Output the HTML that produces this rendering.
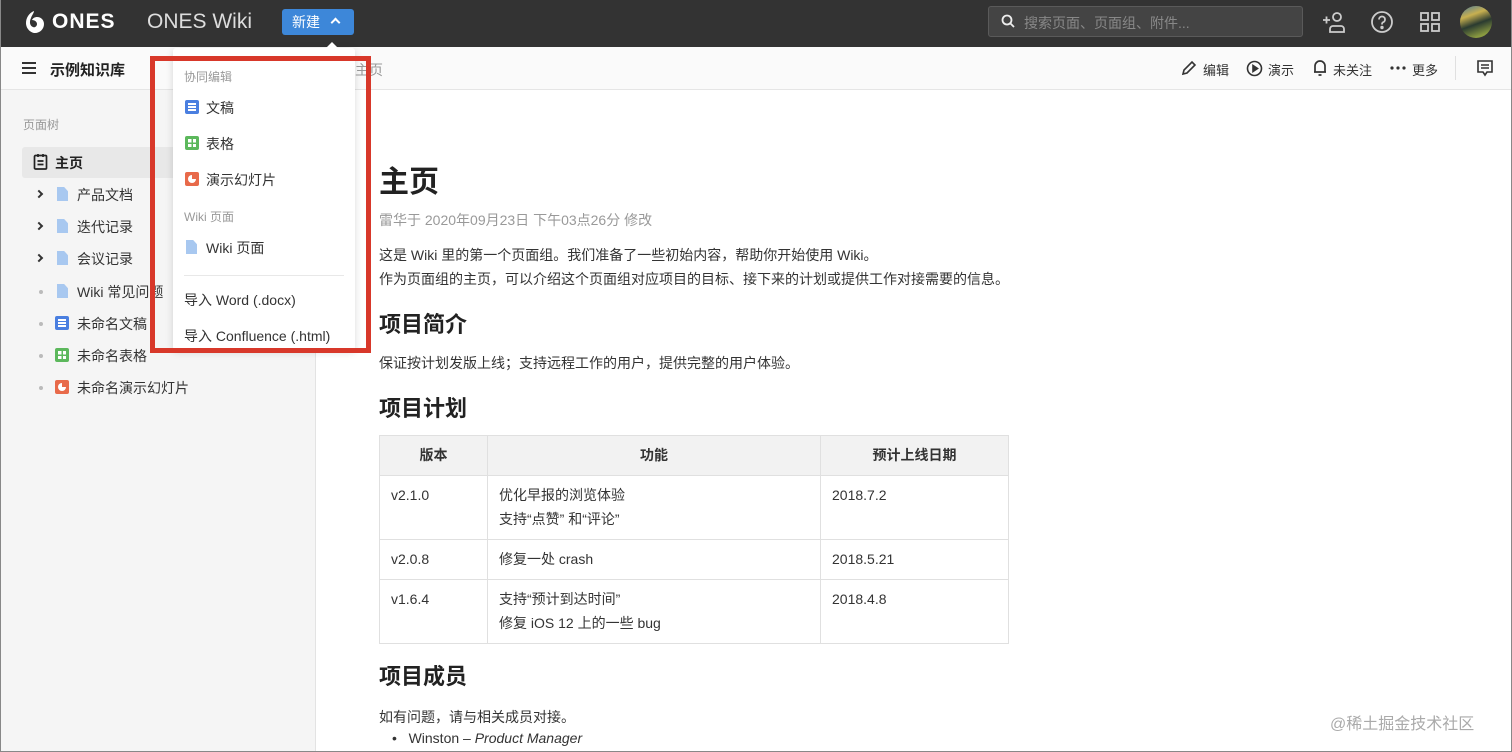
<!DOCTYPE html>
<html><head><meta charset="utf-8"><style>
*{margin:0;padding:0;box-sizing:border-box}
body{width:1512px;height:752px;overflow:hidden;position:relative;background:#fff;font-family:"Liberation Sans","Noto Sans CJK SC",sans-serif;color:#303030}
.a{position:absolute;white-space:nowrap}
#top{position:absolute;left:0;top:0;width:1512px;height:47px;background:#333}
#bar2{position:absolute;left:0;top:47px;width:1512px;height:43px;background:#fafafa;border-bottom:1px solid #e5e5e5}
#side{position:absolute;left:0;top:90px;width:316px;height:662px;background:#f5f5f5;border-right:1px solid #e3e3e3}
.ti{font-size:14px;color:#333}
.dot{position:absolute;width:4px;height:4px;border-radius:2px;background:#bbb}
.doc{position:absolute;width:11px;height:14px;background:#a8c8f0;clip-path:polygon(0 0,65% 0,100% 30%,100% 100%,0 100%)}
.ico{position:absolute;width:14px;height:14px;border-radius:2px}
.ico.d::after{content:"";position:absolute;left:3px;top:3px;width:8px;height:2px;background:#fff;box-shadow:0 3px 0 #fff,0 6px 0 #fff}
.ico.s::after{content:"";position:absolute;left:3px;top:3px;width:8px;height:8px;background:linear-gradient(90deg,transparent 45%,#5cb85c 45%,#5cb85c 60%,transparent 60%),linear-gradient(transparent 45%,#5cb85c 45%,#5cb85c 60%,transparent 60%),#fff}
.ico.p::after{content:"";position:absolute;left:3px;top:3px;width:8px;height:8px;border-radius:50%;background:conic-gradient(#e86a4a 0 25%,#fff 25%)}
.chev{position:absolute;width:6px;height:6px;border-right:2px solid #333;border-top:2px solid #333;transform:rotate(45deg)}
table{position:absolute;left:379px;top:435px;border-collapse:collapse;font-size:14px;color:#333}
td,th{border:1px solid #e0e0e0;vertical-align:top;text-align:left;padding:7px 11px 8px;line-height:24px}
th{background:#f2f2f2;text-align:center;height:40px;padding:7px 11px}
h2{position:absolute;font-size:22px;font-weight:bold;color:#222;white-space:nowrap}
.frame{position:absolute;left:0;top:0;width:1512px;height:752px;border:1px solid #888;border-top:none;pointer-events:none}
</style></head><body>
<div id="top"></div>
<svg class="a" style="left:24px;top:10px" width="22" height="24" viewBox="0 0 22 24"><path d="M10 1C5 3 2 8 2 13c0 6 5 10 9 10 5 0 9-4 9-9 0-4-3-7-7-7-2 0-4 1-5 3 3 0 5 2 5 4s-2 4-4 3c-3-1-4-5-2-9 1-3 3-5 3-7z" fill="#fff"/></svg>
<div class="a" style="left:52px;top:10px;font-size:21px;font-weight:bold;color:#fff;letter-spacing:1px">ONES</div>
<div class="a" style="left:147px;top:10px;font-size:21px;color:#ddd">ONES Wiki</div>
<div class="a" style="left:282px;top:9px;width:72px;height:26px;background:#3d87d9;border-radius:3px;color:#fff;font-size:14px;line-height:26px;padding-left:10px">新建</div>
<div class="a" style="left:332px;top:19px;width:7px;height:7px;border-left:2px solid #fff;border-top:2px solid #fff;transform:rotate(45deg)"></div>
<div class="a" style="left:988px;top:6px;width:315px;height:31px;background:#444;border:1px solid #5a5a5a;border-radius:3px"></div>
<svg class="a" style="left:1001px;top:14px" width="14" height="14"><circle cx="6" cy="6" r="4.5" stroke="#eee" stroke-width="1.8" fill="none"/><path d="M9.5 9.5L13 13" stroke="#eee" stroke-width="1.8"/></svg>
<div class="a" style="left:1024px;top:13px;font-size:14px;color:#888">搜索页面、页面组、附件...</div>
<svg class="a" style="left:1322px;top:10px" width="24" height="24" fill="none" stroke="#ccc" stroke-width="1.8"><path d="M1 10h7M4.5 6.5v7"/><circle cx="15" cy="7" r="4"/><path d="M8 22v-3a3 3 0 0 1 3-3h8a3 3 0 0 1 3 3v3z"/></svg>
<svg class="a" style="left:1370px;top:10px" width="24" height="24" fill="none" stroke="#ccc" stroke-width="1.8"><circle cx="12" cy="12" r="10"/><path d="M9 9.5a3 3 0 1 1 4 2.8c-1 .4-1 1-1 2.2"/><circle cx="12" cy="17.5" r=".8" fill="#ccc"/></svg>
<svg class="a" style="left:1419px;top:11px" width="22" height="22" fill="none" stroke="#ccc" stroke-width="1.8"><rect x="2" y="2" width="7" height="7"/><rect x="13" y="2" width="7" height="7"/><rect x="2" y="13" width="7" height="7"/><rect x="13" y="13" width="7" height="7"/></svg>
<div class="a" style="left:1460px;top:6px;width:32px;height:32px;border-radius:16px;background:linear-gradient(160deg,#4a7a9a 0%,#c8b050 30%,#2a3a30 55%,#8a9a40 85%)"></div>

<div id="bar2"></div>
<div class="a" style="left:22px;top:62px;width:14px;height:2px;background:#333;box-shadow:0 5px 0 #333,0 10px 0 #333"></div>
<div class="a" style="left:50px;top:59px;font-size:15px;font-weight:bold;color:#222">示例知识库</div>
<div class="a" style="left:355px;top:60px;font-size:14px;color:#999">主页</div>
<svg class="a" style="left:1181px;top:60px" width="16" height="16" fill="none" stroke="#333" stroke-width="1.6"><path d="M2 14l1-4 8-8 3 3-8 8z"/></svg>
<div class="a" style="left:1203px;top:60px;font-size:13px;color:#333">编辑</div>
<svg class="a" style="left:1246px;top:60px" width="17" height="17" fill="none" stroke="#333" stroke-width="1.6"><circle cx="8.5" cy="8.5" r="7"/><path d="M7 5.5v6l4.5-3z" fill="#333"/></svg>
<div class="a" style="left:1268px;top:60px;font-size:13px;color:#333">演示</div>
<svg class="a" style="left:1313px;top:59px" width="14" height="18" fill="none" stroke="#333" stroke-width="1.7"><path d="M2 13V7a5 5 0 0 1 10 0v6zM1 13h12M5.5 16h3"/></svg>
<div class="a" style="left:1333px;top:60px;font-size:13px;color:#333">未关注</div>
<svg class="a" style="left:1390px;top:66px" width="16" height="4"><circle cx="2" cy="2" r="1.6" fill="#333"/><circle cx="8" cy="2" r="1.6" fill="#333"/><circle cx="14" cy="2" r="1.6" fill="#333"/></svg>
<div class="a" style="left:1412px;top:60px;font-size:13px;color:#333">更多</div>
<div class="a" style="left:1455px;top:56px;width:1px;height:24px;background:#e0e0e0"></div>
<svg class="a" style="left:1476px;top:59px" width="18" height="18" fill="none" stroke="#333" stroke-width="1.6"><path d="M2 2h14v11h-5l-2 3-2-3H2z M5 6h8M5 9h8"/></svg>

<div id="side"></div>
<div class="a" style="left:23px;top:116px;font-size:12px;color:#999">页面树</div>
<div class="a" style="left:22px;top:147px;width:294px;height:31px;background:#e8e8e8;border-radius:3px"></div>
<svg class="a" style="left:33px;top:153px" width="15" height="17" fill="none" stroke="#222" stroke-width="1.7"><rect x="1.5" y="2.5" width="12" height="13.5" rx="1"/><path d="M5 1v3M10 1v3M4.5 8h6M4.5 11.5h6"/></svg>
<div class="a" style="left:55px;top:153px;font-size:14px;font-weight:bold;color:#222">主页</div>
<div class="chev" style="left:36px;top:191px"></div><div class="doc" style="left:57px;top:187px"></div><div class="a ti" style="left:77px;top:185px">产品文档</div>
<div class="chev" style="left:36px;top:223px"></div><div class="doc" style="left:57px;top:219px"></div><div class="a ti" style="left:77px;top:217px">迭代记录</div>
<div class="chev" style="left:36px;top:255px"></div><div class="doc" style="left:57px;top:251px"></div><div class="a ti" style="left:77px;top:249px">会议记录</div>
<div class="dot" style="left:39px;top:290px"></div><div class="doc" style="left:57px;top:284px"></div><div class="a ti" style="left:77px;top:282px">Wiki 常见问题</div>
<div class="dot" style="left:39px;top:322px"></div><div class="ico d" style="left:55px;top:316px;background:#4a7fe0"></div><div class="a ti" style="left:77px;top:314px">未命名文稿</div>
<div class="dot" style="left:39px;top:354px"></div><div class="ico s" style="left:55px;top:348px;background:#5cb85c"></div><div class="a ti" style="left:77px;top:346px">未命名表格</div>
<div class="dot" style="left:39px;top:386px"></div><div class="ico p" style="left:55px;top:380px;background:#e86a4a"></div><div class="a ti" style="left:77px;top:378px">未命名演示幻灯片</div>

<div class="a" style="left:379px;top:157px;font-size:30px;font-weight:bold;color:#222">主页</div>
<div class="a" style="left:379px;top:210px;font-size:14px;color:#999">雷华于 2020年09月23日 下午03点26分 修改</div>
<div class="a" style="left:379px;top:243px;font-size:14px;line-height:24px;color:#333">这是 Wiki 里的第一个页面组。我们准备了一些初始内容，帮助你开始使用 Wiki。<br>作为页面组的主页，可以介绍这个页面组对应项目的目标、接下来的计划或提供工作对接需要的信息。</div>
<h2 style="left:379px;top:307px">项目简介</h2>
<div class="a" style="left:379px;top:353px;font-size:14px;color:#333">保证按计划发版上线；支持远程工作的用户，提供完整的用户体验。</div>
<h2 style="left:379px;top:391px">项目计划</h2>
<table>
<tr><th style="width:108px">版本</th><th style="width:333px">功能</th><th style="width:188px">预计上线日期</th></tr>
<tr><td style="height:64px">v2.1.0</td><td>优化早报的浏览体验<br>支持“点赞” 和“评论”</td><td>2018.7.2</td></tr>
<tr><td style="height:40px">v2.0.8</td><td>修复一处 crash</td><td>2018.5.21</td></tr>
<tr><td style="height:64px">v1.6.4</td><td>支持“预计到达时间”<br>修复 iOS 12 上的一些 bug</td><td>2018.4.8</td></tr>
</table>
<h2 style="left:379px;top:659px">项目成员</h2>
<div class="a" style="left:379px;top:707px;font-size:14px;color:#333">如有问题，请与相关成员对接。</div>
<div class="a" style="left:392px;top:730px;font-size:14px;color:#333">•&nbsp;&nbsp;&nbsp;Winston – <i>Product Manager</i></div>
<div class="a" style="left:1330px;top:710px;font-size:16px;color:#aaa">@稀土掘金技术社区</div>

<div class="a" style="left:173px;top:48px;width:182px;height:302px;background:#fff;box-shadow:0 2px 8px rgba(0,0,0,.15);border-radius:3px"></div>
<div class="a" style="left:326px;top:42px;width:0;height:0;border:6px solid transparent;border-bottom-color:#fff;border-top:none"></div>
<div class="a" style="left:184px;top:68px;font-size:12px;color:#999">协同编辑</div>
<div class="ico d" style="left:185px;top:100px;background:#4a7fe0"></div><div class="a ti" style="left:206px;top:98px">文稿</div>
<div class="ico s" style="left:185px;top:136px;background:#5cb85c"></div><div class="a ti" style="left:206px;top:134px">表格</div>
<div class="ico p" style="left:185px;top:172px;background:#e86a4a"></div><div class="a ti" style="left:206px;top:170px">演示幻灯片</div>
<div class="a" style="left:184px;top:208px;font-size:12px;color:#999">Wiki 页面</div>
<div class="doc" style="left:186px;top:240px"></div><div class="a ti" style="left:206px;top:238px">Wiki 页面</div>
<div class="a" style="left:184px;top:275px;width:160px;height:1px;background:#e8e8e8"></div>
<div class="a ti" style="left:184px;top:290px">导入 Word (.docx)</div>
<div class="a ti" style="left:184px;top:326px">导入 Confluence (.html)</div>
<div class="a" style="left:150px;top:56px;width:221px;height:297px;border:5px solid #d8382a"></div>
<div class="frame"></div>
</body></html>
